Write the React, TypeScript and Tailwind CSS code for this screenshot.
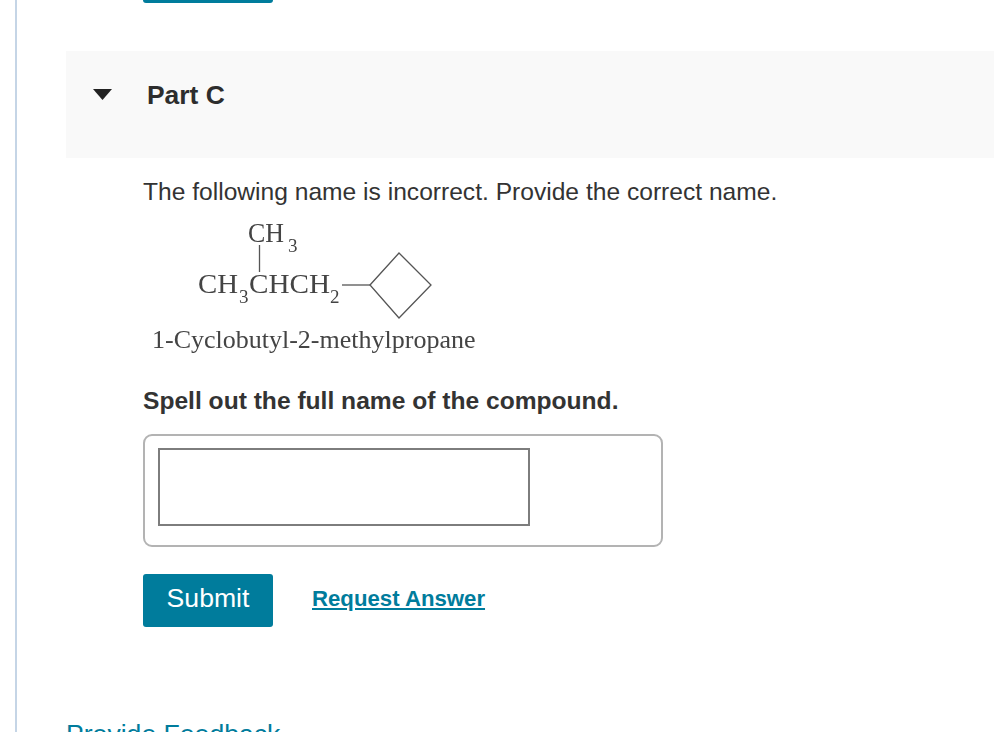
const SANS = "font-['Liberation_Sans',Arial,sans-serif]";

function ChemFigure() {
  return (
    <svg width="340" height="115" viewBox="0 0 340 115" className="block blur-[0.35px]">
      <g fill="#444" fontFamily="'Liberation Serif', serif">
        <text x="108" y="32" fontSize="27" textLength="36" lengthAdjust="spacingAndGlyphs">CH</text>
        <text x="148" y="42" fontSize="19">3</text>
        <text x="58" y="83" fontSize="27" textLength="40" lengthAdjust="spacingAndGlyphs">CH</text>
        <text x="99" y="93" fontSize="19">3</text>
        <text x="109" y="83" fontSize="27" textLength="81" lengthAdjust="spacingAndGlyphs">CHCH</text>
        <text x="190" y="93" fontSize="19">2</text>
      </g>
      <g fill="none" stroke="#555" strokeWidth="1.3">
        <path d="M119.5 35V62" />
        <path d="M202 75H230" />
        <path d="M230 75L259 43L291 75L259 108Z" />
      </g>
    </svg>
  );
}

export default function App() {
  return (
    <div className={`flex h-[732px] w-[994px] overflow-hidden bg-white ${SANS}`}>
      <div className="ml-[15px] h-full w-[2px] shrink-0 bg-[#c5d5e6]" />
      <main className="ml-[49px] flex-1">
        <div className="ml-[77px] h-[3px] w-[130px] rounded-b-[3px] bg-[#007c9c]" />

        <section className="mt-[48px] flex h-[107px] items-start bg-[#f9f9f9] pl-[27px] pt-[27px] text-[#2d2d2d]">
          <svg width="19" height="11" viewBox="0 0 19 11" className="mt-[11px]">
            <path d="M0 0H19L9.5 11Z" fill="#222" />
          </svg>
          <h2 className="ml-[35px] text-[26.4px] font-bold leading-[34px]">Part C</h2>
        </section>

        <div className="pl-[77px]">
          <p className="mt-[19px] text-[24.6px] leading-[30px] text-[#333]">
            The following name is incorrect. Provide the correct name.
          </p>
          <div className="-ml-[3px] mt-[3px]">
            <ChemFigure />
          </div>
          <p className="pl-[9px] font-['Liberation_Serif',serif] text-[26px] leading-[30px] text-[#444] blur-[0.35px]">
            1-Cyclobutyl-2-methylpropane
          </p>
          <p className="mt-[31px] text-[24.6px] font-bold leading-[30px] text-[#333]">
            Spell out the full name of the compound.
          </p>

          <div className="mt-[18px] h-[113px] w-[520px] rounded-[9px] border-2 border-[#b3b3b3] pl-[13px] pt-[12px]">
            <input
              type="text"
              aria-label="Answer"
              className="block h-[78px] w-[372px] border-2 border-[#7d7d7d] bg-white"
            />
          </div>

          <div className="mt-[27px] flex items-center">
            <button className="h-[53px] w-[130px] rounded-[3px] bg-[#007c9c] pb-[3px] text-[26.6px] text-white">
              Submit
            </button>
            <a href="#" className="mb-[3px] ml-[39px] text-[22.2px] font-bold text-[#007c9c] underline">
              Request Answer
            </a>
          </div>
        </div>

        <a href="#" className="mt-[92px] block text-[26.6px] leading-[30px] text-[#007c9c]">
          Provide Feedback
        </a>
      </main>
    </div>
  );
}
